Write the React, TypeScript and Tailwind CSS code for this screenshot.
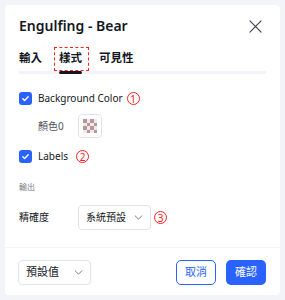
import React from "react";

const font = { fontFamily: '"Noto Sans", "Noto Sans CJK TC", sans-serif' };

function Check() {
  return (
    <span className="flex h-[13px] w-[13px] shrink-0 items-center justify-center rounded-[3px] bg-[#2962ff]">
      <svg width="9" height="9" viewBox="0 0 10 10" fill="none">
        <path d="M2 5.2l2 2L8 3" stroke="white" strokeWidth="1.6" strokeLinecap="round" strokeLinejoin="round" />
      </svg>
    </span>
  );
}

function Num({ n }: { n: string }) {
  return (
    <span className="flex h-[13px] w-[13px] items-center justify-center rounded-full border border-[#ff2020] text-[10px] leading-none text-[#ff2020]">
      {n}
    </span>
  );
}

function Chevron() {
  return (
    <svg width="9" height="5" viewBox="0 0 10 6" fill="none">
      <path d="M1 1l4 4 4-4" stroke="#6a6d78" strokeWidth="1.1" strokeLinecap="round" strokeLinejoin="round" />
    </svg>
  );
}

export default function App() {
  const cells = Array.from({ length: 16 }, (_, i) => i);
  return (
    <div className="h-[300px] w-[285px] bg-[#f2f4f8] p-[5px]" style={font}>
      <div className="flex h-[290px] flex-col rounded-[4px] bg-white">
        <div className="flex h-[22px] items-center justify-between pl-[14px] pr-[18px] mt-[10px]">
          <span className="text-[14px] font-semibold leading-[22px] text-[#131722]">Engulfing - Bear</span>
          <svg width="13" height="13" viewBox="0 0 14 14" fill="none">
            <path d="M1 1l12 12M13 1L1 13" stroke="#3c3f4a" strokeWidth="1.2" strokeLinecap="round" />
          </svg>
        </div>
        <div className="mx-[14px] mt-[13px] flex items-end gap-[17px] border-b-[3px] border-[#f0f3fa] text-[11.5px] font-semibold text-[#131722]">
          <span className="whitespace-nowrap pb-[5px] leading-[16px]">輸入</span>
          <span className="relative whitespace-nowrap pb-[5px] leading-[16px]">
            樣式
            <span className="absolute -bottom-[3px] left-0 h-[3px] w-full rounded-sm bg-[#131722]" />
            <span className="absolute -left-[5px] -top-[3px] h-[24px] w-[35px] border border-dashed border-[#ff2020]" />
          </span>
          <span className="whitespace-nowrap pb-[5px] leading-[16px]">可見性</span>
        </div>
        <div className="mt-[18px] flex h-[13px] items-center pl-[14px] text-[10px] text-[#131722]">
          <Check />
          <span className="ml-[6px] mr-[4px] whitespace-nowrap">Background Color</span>
          <Num n="1" />
        </div>
        <div className="mt-[9px] flex h-[24px] items-center pl-[33px] text-[10px] text-[#50535e]">
          <span className="w-[40px] whitespace-nowrap">顏色0</span>
          <span className="flex h-[24px] w-[24px] items-center justify-center rounded-[4px] border border-[#e0e3eb]">
            <span className="grid h-[14px] w-[14px] grid-cols-4">
              {cells.map((i) => (
                <span
                  key={i}
                  className={(Math.floor(i / 4) + i) % 2 === 0 ? "bg-[#b29a9c]" : "bg-[#f6e6e6]"}
                />
              ))}
            </span>
          </span>
        </div>
        <div className="mt-[12px] flex h-[13px] items-center pl-[14px] text-[10px] text-[#131722]">
          <Check />
          <span className="ml-[6px] w-[38px] whitespace-nowrap">Labels</span>
          <Num n="2" />
        </div>
        <div className="mt-[18px] h-[12px] pl-[14px] text-[8px] leading-[12px] text-[#787b86]">輸出</div>
        <div className="mt-[12px] flex h-[25px] items-center pl-[14px] text-[10px] text-[#131722]">
          <span className="w-[59px] whitespace-nowrap">精確度</span>
          <span className="flex h-[25px] w-[73px] items-center justify-between rounded-[4px] border border-[#e0e3eb] pl-[7px] pr-[7px] text-[#131722]">
            <span className="whitespace-nowrap">系統預設</span>
            <Chevron />
          </span>
          <span className="ml-[3px]">
            <Num n="3" />
          </span>
        </div>
        <div className="mt-[17px] border-t border-[#f0f3fa]" />
        <div className="flex items-center justify-between pl-[13px] pr-[14px] pt-[12px] text-[11px]">
          <span className="flex h-[25px] w-[73px] items-center justify-between rounded-[4px] border border-[#e0e3eb] pl-[7px] pr-[7px] text-[#131722]">
            <span className="whitespace-nowrap">預設值</span>
            <Chevron />
          </span>
          <div className="flex gap-[10px]">
            <span className="flex h-[25px] w-[40px] items-center justify-center rounded-[5px] border border-[#2962ff] text-[#2962ff]">取消</span>
            <span className="flex h-[25px] w-[40px] items-center justify-center rounded-[5px] bg-[#2962ff] text-white">確認</span>
          </div>
        </div>
      </div>
    </div>
  );
}
